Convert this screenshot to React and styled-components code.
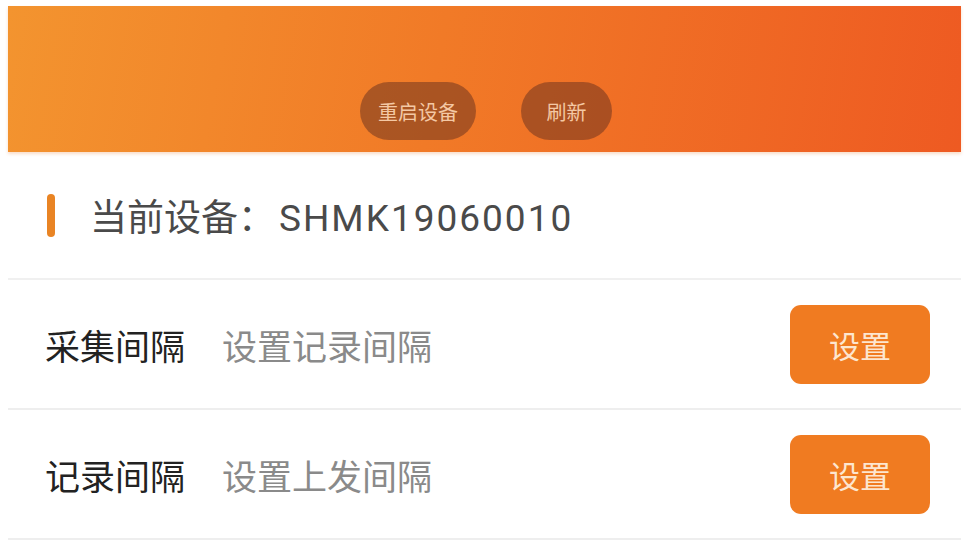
import React from "react";
import styled, { createGlobalStyle } from "styled-components";

const GlobalStyle = createGlobalStyle`
  body {
    margin: 0;
    background: #ffffff;
    font-family: Roboto, "Noto Sans CJK SC", sans-serif;
  }
`;

const Page = styled.div`
  width: 966px;
  height: 540px;
  padding: 6px 5px 0 8px;
  box-sizing: border-box;
  overflow: hidden;
  background: #fff;
`;

const Header = styled.div`
  height: 146px;
  background: linear-gradient(100deg, #f3942f 0%, #f17a27 45%, #ee5a22 100%);
  display: flex;
  align-items: flex-end;
  justify-content: center;
  gap: 45px;
  padding-bottom: 12px;
  padding-left: 3px;
  box-sizing: border-box;
  box-shadow: 0 2px 3px rgba(230, 120, 40, 0.25);
`;

const PillButton = styled.button`
  height: 58px;
  width: ${(p) => p.w}px;
  border: none;
  border-radius: 29px;
  background: rgba(105, 50, 30, 0.52);
  color: #f4c8a4;
  font-family: "Noto Sans CJK SC", sans-serif;
  font-size: 20px;
  padding: 0;
`;

const DeviceRow = styled.div`
  height: 128px;
  display: flex;
  align-items: center;
  padding-left: 39px;
  border-bottom: 2px solid #f0f0f0;
  box-sizing: border-box;
`;

const Marker = styled.div`
  width: 8px;
  height: 43px;
  border-radius: 4px;
  background: #e98424;
  margin-right: 35px;
`;

const DeviceText = styled.div`
  font-size: 37px;
  color: #4a4a4a;
  font-family: Roboto, "Noto Sans CJK SC", sans-serif;
`;

const DeviceId = styled.span`
  letter-spacing: 2px;
  margin-left: 4px;
`;

const SettingRow = styled.div`
  height: 130px;
  display: flex;
  align-items: center;
  padding: 0 31px 0 37px;
  border-bottom: 2px solid #eeeeee;
  box-sizing: border-box;
`;

const Label = styled.span`
  font-family: "Noto Sans CJK SC", sans-serif;
  font-size: 35px;
  color: #222;
  width: 177px;
`;

const Hint = styled.span`
  font-family: "Noto Sans CJK SC", sans-serif;
  font-size: 35px;
  color: #8a8a8a;
  flex: 1;
`;

const SetButton = styled.button`
  width: 140px;
  height: 79px;
  border: none;
  border-radius: 11px;
  background: #f07b21;
  color: #fde6cf;
  font-family: "Noto Sans CJK SC", sans-serif;
  font-size: 31px;
  padding: 0;
`;

const rows = [
  { label: "采集间隔", hint: "设置记录间隔" },
  { label: "记录间隔", hint: "设置上发间隔" },
];

export default function App() {
  return (
    <>
      <GlobalStyle />
      <Page>
        <Header>
          <PillButton w={116}>重启设备</PillButton>
          <PillButton w={91}>刷新</PillButton>
        </Header>
        <DeviceRow>
          <Marker />
          <DeviceText>
            当前设备：<DeviceId>SHMK19060010</DeviceId>
          </DeviceText>
        </DeviceRow>
        {rows.map((r) => (
          <SettingRow key={r.label}>
            <Label>{r.label}</Label>
            <Hint>{r.hint}</Hint>
            <SetButton>设置</SetButton>
          </SettingRow>
        ))}
      </Page>
    </>
  );
}
